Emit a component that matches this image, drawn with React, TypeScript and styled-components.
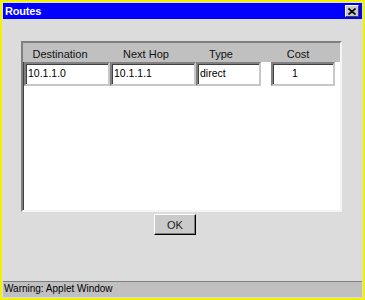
import React from 'react';
import styled, { createGlobalStyle } from 'styled-components';

const GlobalStyle = createGlobalStyle`
  html, body {
    margin: 0;
    padding: 0;
    background: #ffffff;
  }
  * {
    box-sizing: border-box;
  }
`;

const Frame = styled.div`
  width: 365px;
  height: 300px;
  border: 2px solid #f2f200;
  padding: 1px;
  background: #dcdcdc;
  display: flex;
  flex-direction: column;
  font-family: 'Liberation Sans', Arial, sans-serif;
`;

const TitleBar = styled.div`
  height: 16px;
  background: #0000ff;
  display: flex;
  align-items: center;
  justify-content: space-between;
  padding: 0 3px 0 2px;
`;

const Title = styled.span`
  color: #ffffff;
  font-weight: bold;
  font-size: 11px;
  letter-spacing: -0.2px;
`;

const CloseButton = styled.div`
  width: 14px;
  height: 12px;
  background: #c8c8c8;
  border: 1px solid;
  border-color: #ffffff #404040 #404040 #ffffff;
  display: flex;
  align-items: center;
  justify-content: center;
`;

const Body = styled.div`
  flex: 1;
  padding: 22px 20px 0 18px;
  display: flex;
  flex-direction: column;
`;

const TablePanel = styled.div`
  height: 171px;
  background: #ffffff;
  border: 2px solid;
  border-color: #808080 #f4f4f4 #f4f4f4 #808080;
  box-shadow: inset 1px 1px 0 #404040;
  display: flex;
  flex-direction: column;
`;

const Row = styled.div<{ $header?: boolean }>`
  display: grid;
  grid-template-columns: 86px 86px 65px 74px;
  align-items: start;
  padding-left: 1px;
  height: ${(p) => (p.$header ? '19px' : 'auto')};
  background: ${(p) => (p.$header ? '#c0c0c0' : 'transparent')};
`;

const HeaderCell = styled.div<{ $shift: number }>`
  font-size: 11px;
  color: #111111;
  text-align: center;
  padding-top: 5px;
  padding-right: ${(p) => p.$shift}px;
  white-space: nowrap;
`;

const Cell = styled.div<{ $offset?: number }>`
  padding-left: ${(p) => p.$offset ?? 0}px;
`;

const Field = styled.div<{ $width: number; $indent: number }>`
  width: ${(p) => p.$width}px;
  height: 24px;
  border: 2px solid;
  border-color: #808080 #c8c8c8 #c8c8c8 #808080;
  box-shadow: inset 1px 1px 0 #404040;
  background: #ffffff;
  font-size: 10.5px;
  color: #000000;
  padding: 3px 0 0 ${(p) => p.$indent}px;
  white-space: nowrap;
`;

const ButtonRow = styled.div`
  display: flex;
  padding-left: 133px;
  margin-top: 2px;
`;

const OkButton = styled.div`
  width: 42px;
  height: 21px;
  background: #cacaca;
  border: 1px solid;
  border-color: #ffffff #000000 #000000 #ffffff;
  box-shadow: inset -1px -1px 0 #808080;
  font-size: 11px;
  color: #222222;
  display: flex;
  align-items: center;
  justify-content: center;
`;

const StatusBar = styled.div`
  height: 16px;
  background: #c0c0c0;
  border-top: 1px solid #808080;
  font-size: 10px;
  color: #000000;
  padding: 1px 0 0 1px;
  white-space: nowrap;
`;

const headers = [
  { label: 'Destination', shift: 14 },
  { label: 'Next Hop', shift: 14 },
  { label: 'Type', shift: 15 },
  { label: 'Cost', shift: 0 },
];

const fields = [
  { value: '10.1.1.0', width: 86, indent: 2 },
  { value: '10.1.1.1', width: 86, indent: 2 },
  { value: 'direct', width: 65, indent: 2 },
  { value: '1', width: 64, indent: 19 },
];

const App: React.FC = () => {
  return (
    <>
      <GlobalStyle />
      <Frame>
        <TitleBar>
          <Title>Routes</Title>
          <CloseButton>
            <svg width="8" height="7" viewBox="0 0 8 7">
              <path d="M0.5 0.5 L7.5 6.5 M7.5 0.5 L0.5 6.5" stroke="#000" strokeWidth="1.6" />
            </svg>
          </CloseButton>
        </TitleBar>
        <Body>
          <TablePanel>
            <Row $header>
              {headers.map((h) => (
                <HeaderCell key={h.label} $shift={h.shift}>
                  {h.label}
                </HeaderCell>
              ))}
            </Row>
            <Row>
              {fields.map((f, i) => (
                <Cell key={i} $offset={i === 3 ? 10 : 0}>
                  <Field $width={f.width} $indent={f.indent}>
                    {f.value}
                  </Field>
                </Cell>
              ))}
            </Row>
          </TablePanel>
          <ButtonRow>
            <OkButton>OK</OkButton>
          </ButtonRow>
        </Body>
        <StatusBar>Warning: Applet Window</StatusBar>
      </Frame>
    </>
  );
};

export default App;
